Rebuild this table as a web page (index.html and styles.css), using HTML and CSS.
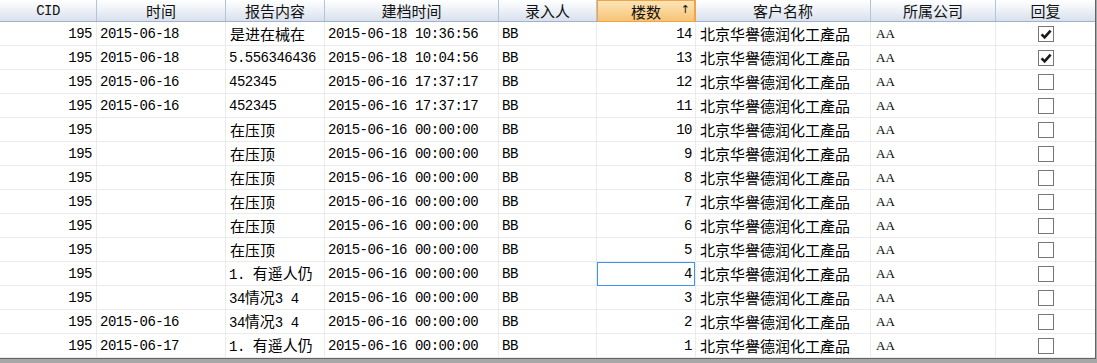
FILE: index.html
```html
<!DOCTYPE html>
<html>
<head>
<meta charset="utf-8">
<link rel="stylesheet" href="styles.css">
</head>
<body>
<div class="grid">
  <div class="row head">
    <div class="h"><span class="lat">CID</span></div>
    <div class="h">时间</div>
    <div class="h">报告内容</div>
    <div class="h">建档时间</div>
    <div class="h">录入人</div>
    <div class="h sorted">楼数<span class="arrow">↑</span></div>
    <div class="h">客户名称</div>
    <div class="h">所属公司</div>
    <div class="h last">回复</div>
  </div>

  <div class="row"><div class="c r">195</div><div class="c">2015-06-18</div><div class="c zh">是进在械在</div><div class="c">2015-06-18 10:36:56</div><div class="c">BB</div><div class="c r n">14</div><div class="c zh">北京华譽德润化工產品</div><div class="c aa">AA</div><div class="c chk last"><span class="box on"><svg viewBox="0 0 14 14"><path d="M2.6 7.4 L5.6 10.4 L11.6 3.6" fill="none" stroke="#1a1a1a" stroke-width="2.6"/></svg></span></div></div>
  <div class="row"><div class="c r">195</div><div class="c">2015-06-18</div><div class="c">5.556346436</div><div class="c">2015-06-18 10:04:56</div><div class="c">BB</div><div class="c r n">13</div><div class="c zh">北京华譽德润化工產品</div><div class="c aa">AA</div><div class="c chk last"><span class="box on"><svg viewBox="0 0 14 14"><path d="M2.6 7.4 L5.6 10.4 L11.6 3.6" fill="none" stroke="#1a1a1a" stroke-width="2.6"/></svg></span></div></div>
  <div class="row"><div class="c r">195</div><div class="c">2015-06-16</div><div class="c">452345</div><div class="c">2015-06-16 17:37:17</div><div class="c">BB</div><div class="c r n">12</div><div class="c zh">北京华譽德润化工產品</div><div class="c aa">AA</div><div class="c chk last"><span class="box"></span></div></div>
  <div class="row"><div class="c r">195</div><div class="c">2015-06-16</div><div class="c">452345</div><div class="c">2015-06-16 17:37:17</div><div class="c">BB</div><div class="c r n">11</div><div class="c zh">北京华譽德润化工產品</div><div class="c aa">AA</div><div class="c chk last"><span class="box"></span></div></div>
  <div class="row"><div class="c r">195</div><div class="c"></div><div class="c zh">在压顶</div><div class="c">2015-06-16 00:00:00</div><div class="c">BB</div><div class="c r n">10</div><div class="c zh">北京华譽德润化工產品</div><div class="c aa">AA</div><div class="c chk last"><span class="box"></span></div></div>
  <div class="row"><div class="c r">195</div><div class="c"></div><div class="c zh">在压顶</div><div class="c">2015-06-16 00:00:00</div><div class="c">BB</div><div class="c r n">9</div><div class="c zh">北京华譽德润化工產品</div><div class="c aa">AA</div><div class="c chk last"><span class="box"></span></div></div>
  <div class="row"><div class="c r">195</div><div class="c"></div><div class="c zh">在压顶</div><div class="c">2015-06-16 00:00:00</div><div class="c">BB</div><div class="c r n">8</div><div class="c zh">北京华譽德润化工產品</div><div class="c aa">AA</div><div class="c chk last"><span class="box"></span></div></div>
  <div class="row"><div class="c r">195</div><div class="c"></div><div class="c zh">在压顶</div><div class="c">2015-06-16 00:00:00</div><div class="c">BB</div><div class="c r n">7</div><div class="c zh">北京华譽德润化工產品</div><div class="c aa">AA</div><div class="c chk last"><span class="box"></span></div></div>
  <div class="row"><div class="c r">195</div><div class="c"></div><div class="c zh">在压顶</div><div class="c">2015-06-16 00:00:00</div><div class="c">BB</div><div class="c r n">6</div><div class="c zh">北京华譽德润化工產品</div><div class="c aa">AA</div><div class="c chk last"><span class="box"></span></div></div>
  <div class="row"><div class="c r">195</div><div class="c"></div><div class="c zh">在压顶</div><div class="c">2015-06-16 00:00:00</div><div class="c">BB</div><div class="c r n">5</div><div class="c zh">北京华譽德润化工產品</div><div class="c aa">AA</div><div class="c chk last"><span class="box"></span></div></div>
  <div class="row"><div class="c r">195</div><div class="c"></div><div class="c"><span>1. <span class="zhs">有遥人仍</span></span></div><div class="c">2015-06-16 00:00:00</div><div class="c">BB</div><div class="c r n sel">4</div><div class="c zh">北京华譽德润化工產品</div><div class="c aa">AA</div><div class="c chk last"><span class="box"></span></div></div>
  <div class="row"><div class="c r">195</div><div class="c"></div><div class="c"><span>34<span class="zhs">情况</span>3 4</span></div><div class="c">2015-06-16 00:00:00</div><div class="c">BB</div><div class="c r n">3</div><div class="c zh">北京华譽德润化工產品</div><div class="c aa">AA</div><div class="c chk last"><span class="box"></span></div></div>
  <div class="row"><div class="c r">195</div><div class="c">2015-06-16</div><div class="c"><span>34<span class="zhs">情况</span>3 4</span></div><div class="c">2015-06-16 00:00:00</div><div class="c">BB</div><div class="c r n">2</div><div class="c zh">北京华譽德润化工產品</div><div class="c aa">AA</div><div class="c chk last"><span class="box"></span></div></div>
  <div class="row"><div class="c r">195</div><div class="c">2015-06-17</div><div class="c"><span>1. <span class="zhs">有遥人仍</span></span></div><div class="c">2015-06-16 00:00:00</div><div class="c">BB</div><div class="c r n">1</div><div class="c zh">北京华譽德润化工產品</div><div class="c aa">AA</div><div class="c chk last"><span class="box"></span></div></div>
</div>
</body>
</html>
```

FILE: styles.css
```css
html, body {
  margin: 0;
  padding: 0;
  background: #a7a7a7;
}
body {
  width: 1097px;
  height: 363px;
  overflow: hidden;
}
.grid {
  width: 1095px;
  height: 358px;
  background: #ffffff;
  border-right: 1px solid #646464;
  border-bottom: 1px solid #646464;
  font-family: "Liberation Mono", "Noto Sans CJK SC", monospace;
  font-size: 14px;
  letter-spacing: -0.5px;
  color: #000;
}
.row {
  display: grid;
  grid-template-columns: 97px 129px 99px 174px 98px 99px 175px 125px 99px;
  height: 24px;
  box-sizing: border-box;
  border-bottom: 1px solid #ebebeb;
}
.row.head {
  height: 22px;
  border-bottom: 1px solid #9db2cc;
  background: linear-gradient(#ffffff 0%, #eef2f8 45%, #d9e1ed 100%);
}
.h {
  display: flex;
  align-items: center;
  justify-content: center;
  border-right: 1px solid #b3c3d8;
  font-family: "Noto Sans CJK SC", sans-serif;
  font-size: 15px;
  letter-spacing: 0;
  line-height: 1;
  color: #111;
  position: relative;
}
.h .lat {
  font-family: "Liberation Mono", monospace;
  font-size: 14px;
  letter-spacing: -0.5px;
  padding-top: 1px;
}
.h.last { border-right: none; }
.h.sorted {
  background: linear-gradient(#fde7bd 0%, #fad699 45%, #f6c272 100%);
  box-shadow: inset 0 0 0 1px #f2a443;
  border-right-color: #f2a443;
  margin-bottom: -1px;
}
.arrow {
  position: absolute;
  right: 5px;
  top: 4px;
  font-family: "DejaVu Sans", sans-serif;
  font-size: 11px;
}
.c {
  display: flex;
  align-items: center;
  padding: 0 3px;
  border-right: 1px solid #ebebeb;
  white-space: pre;
  overflow: hidden;
  line-height: 1;
}
.c.r { justify-content: flex-end; padding-right: 4px; }
.c.n { padding-right: 3px; }
.c.zh, .zhs {
  font-family: "Noto Sans CJK SC", sans-serif;
  font-size: 15px;
  letter-spacing: 0;
}
.c.zh { padding-left: 4px; }
.c.aa {
  font-family: "Liberation Serif", serif;
  font-size: 13px;
  letter-spacing: 0;
  padding-left: 5px;
}
.c.last { border-right: none; }
.c.chk { justify-content: center; padding: 0; }
.c.sel {
  box-shadow: inset 0 0 0 1px #3d95f0;
  margin-bottom: -1px;
}
.box {
  display: block;
  width: 14px;
  height: 14px;
  border: 1px solid #767676;
  background: #fff;
  margin-left: 1px;
}
.box svg {
  display: block;
  width: 14px;
  height: 14px;
}
```
